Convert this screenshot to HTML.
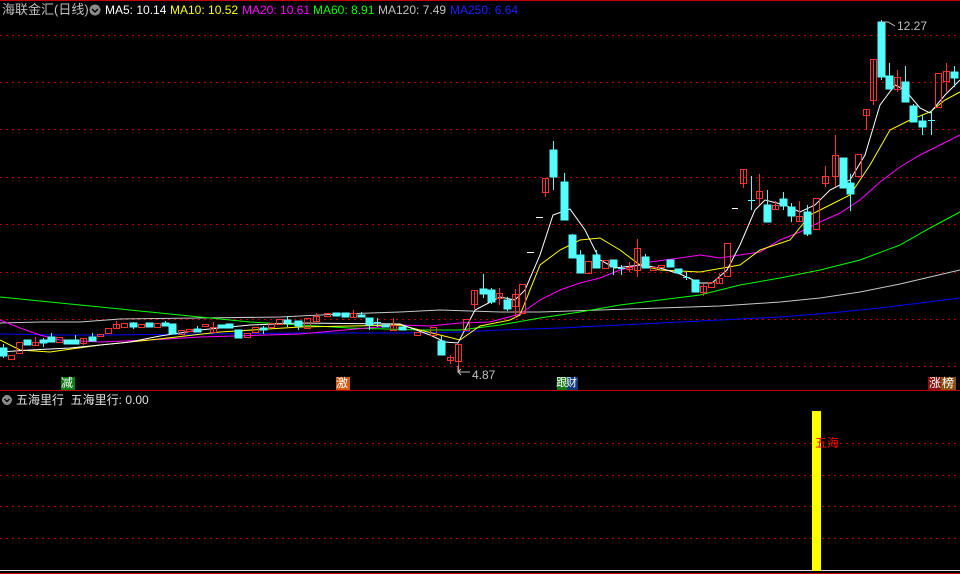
<!DOCTYPE html>
<html><head><meta charset="utf-8"><style>
html,body{margin:0;padding:0;background:#000;width:960px;height:574px;overflow:hidden}
.t{position:absolute;font-family:"Liberation Sans","Noto Sans CJK SC",sans-serif;font-size:12px;white-space:nowrap;line-height:14px}
</style></head><body>
<svg width="960" height="574" style="position:absolute;left:0;top:0" shape-rendering="crispEdges">
<line x1="0" y1="0.5" x2="960" y2="0.5" stroke="#c00000"/>
<g stroke="#c00000" stroke-dasharray="2,4">
<line x1="0" y1="35.5" x2="960" y2="35.5"/><line x1="0" y1="82.5" x2="960" y2="82.5"/>
<line x1="0" y1="129.5" x2="960" y2="129.5"/><line x1="0" y1="177.5" x2="960" y2="177.5"/>
<line x1="0" y1="224.5" x2="960" y2="224.5"/><line x1="0" y1="272.5" x2="960" y2="272.5"/>
<line x1="0" y1="319.5" x2="960" y2="319.5"/><line x1="0" y1="366.5" x2="960" y2="366.5"/>
<line x1="0" y1="443.5" x2="960" y2="443.5"/><line x1="0" y1="475.5" x2="960" y2="475.5"/>
<line x1="0" y1="506.5" x2="960" y2="506.5"/><line x1="0" y1="538.5" x2="960" y2="538.5"/>
</g>
<line x1="0" y1="390.5" x2="960" y2="390.5" stroke="#c00000"/>
<line x1="0" y1="570.5" x2="960" y2="570.5" stroke="#e0e0e0"/>
<line x1="0" y1="573.5" x2="960" y2="573.5" stroke="#c00000"/>
<rect x="812" y="411" width="9" height="160" fill="#ffff00"/>
<g fill="none" stroke-width="1" shape-rendering="auto">
<polyline stroke="#0000ff" points="0,334 60,335 100,335 200,334 300,333 400,333 460,332 500,330 560,328 600,326 660,323 720,320 780,317 830,313 880,308 920,303 960,298"/>
<polyline stroke="#c8c8c8" points="0,323 40,322 80,322 120,319 200,318 280,317 340,314 400,312 440,310 500,312 540,312 600,310 660,308 720,306 780,302 820,298 860,292 900,284 930,277 960,270"/>
<polyline stroke="#00ff00" points="0,297 50,302 100,307 150,312 200,317 250,322 300,325 350,328 420,330 460,330 500,325 540,318 580,312 620,305 660,300 700,295 740,285 780,278 820,270 860,260 900,245 930,228 960,212"/>
<polyline stroke="#ff00ff" points="0,320 20,328 40,335 60,340 100,342 150,340 200,337 300,334 400,325 430,326 460,323 490,322 520,314 540,300 560,290 580,283 600,278 620,270 650,262 680,258 700,255 720,258 740,255 760,252 780,240 800,232 820,222 840,213 860,200 880,182 900,167 920,155 940,145 960,135"/>
<polyline stroke="#ffff00" points="0,340 20,350 50,352 100,345 150,340 220,332 300,327 400,325 440,335 460,340 480,326 510,320 520,315 540,265 560,250 580,240 600,238 620,250 640,265 660,270 700,272 740,265 760,250 790,240 810,215 830,205 850,195 870,165 890,130 910,120 930,112 945,100 960,92"/>
<polyline stroke="#ffffff" points="0,352 30,350 70,348 130,342 160,336 200,330 250,325 300,323 400,324 430,335 445,342 458,343 475,310 500,297 515,300 525,290 540,255 553,215 570,209 585,230 600,260 615,268 640,265 660,268 680,274 700,283 712,283 727,270 740,245 755,210 765,200 785,205 800,212 815,205 830,190 850,180 865,155 880,105 895,85 905,90 920,108 930,113 945,95 960,80"/>
</g>
<g id="c">
<!-- cyan candles: wick line + filled rect -->
<g stroke="#54ffff" fill="#54ffff">
<line x1="3.5" y1="344" x2="3.5" y2="358"/><rect x="0" y="348" width="7" height="8"/>
<rect x="24" y="340" width="7" height="5"/>
<line x1="43.5" y1="338" x2="43.5" y2="347"/><rect x="40" y="340" width="7" height="3"/>
<line x1="51.5" y1="333" x2="51.5" y2="342"/><rect x="48" y="337" width="7" height="5"/>
<rect x="64" y="340" width="7" height="4"/>
<line x1="75.5" y1="335" x2="75.5" y2="344"/><rect x="72" y="340" width="7" height="4"/>
<line x1="92.5" y1="333" x2="92.5" y2="341"/><rect x="89" y="337" width="7" height="4"/>
<line x1="133.5" y1="322" x2="133.5" y2="329"/><rect x="130" y="323" width="7" height="4"/>
<rect x="146" y="323" width="7" height="4"/>
<line x1="165.5" y1="321" x2="165.5" y2="326"/><rect x="162" y="323" width="7" height="3"/>
<rect x="169" y="324" width="7" height="10"/>
<line x1="197.5" y1="326" x2="197.5" y2="332"/><rect x="194" y="329" width="7" height="3"/>
<rect x="218" y="325" width="7" height="3"/>
<rect x="226" y="324" width="7" height="4"/>
<rect x="235" y="330" width="7" height="8"/>
<line x1="263.5" y1="326" x2="263.5" y2="334"/><rect x="260" y="328" width="7" height="2"/>
<line x1="287.5" y1="316" x2="287.5" y2="327"/><rect x="284" y="320" width="7" height="3"/>
<line x1="298.5" y1="321" x2="298.5" y2="330"/><rect x="295" y="321" width="7" height="5"/>
<rect x="333" y="313" width="7" height="3"/>
<rect x="342" y="313" width="7" height="4"/>
<line x1="361.5" y1="312" x2="361.5" y2="317"/><rect x="358" y="315" width="7" height="2"/>
<line x1="369.5" y1="318" x2="369.5" y2="330"/><rect x="366" y="318" width="7" height="7"/>
<line x1="377.5" y1="318" x2="377.5" y2="327"/><line x1="374" y1="322.5" x2="381" y2="322.5"/>
<rect x="382" y="325" width="7" height="2"/>
<rect x="399" y="327" width="7" height="3"/>
<line x1="441.5" y1="336" x2="441.5" y2="355"/><rect x="438" y="341" width="7" height="14"/>
<line x1="483.5" y1="274" x2="483.5" y2="298"/><rect x="480" y="289" width="7" height="5"/>
<line x1="491.5" y1="288" x2="491.5" y2="304"/><rect x="488" y="290" width="7" height="12"/>
<line x1="507.5" y1="297" x2="507.5" y2="311"/><rect x="504" y="300" width="7" height="9"/>
<line x1="553.5" y1="141" x2="553.5" y2="190"/><rect x="550" y="150" width="7" height="27"/>
<line x1="564.5" y1="173" x2="564.5" y2="220"/><rect x="561" y="182" width="7" height="38"/>
<line x1="572.5" y1="234" x2="572.5" y2="258"/><rect x="569" y="235" width="7" height="23"/>
<line x1="580.5" y1="250" x2="580.5" y2="273"/><rect x="577" y="255" width="7" height="18"/>
<line x1="596.5" y1="250" x2="596.5" y2="268"/><rect x="593" y="255" width="7" height="13"/>
<line x1="613.5" y1="260" x2="613.5" y2="275"/><rect x="610" y="260" width="7" height="7"/>
<line x1="621.5" y1="265" x2="621.5" y2="275"/><line x1="618" y1="268.5" x2="625" y2="268.5"/>
<line x1="645.5" y1="254" x2="645.5" y2="268"/><rect x="642" y="257" width="7" height="11"/>
<rect x="667" y="260" width="7" height="7"/>
<rect x="675" y="269" width="7" height="4"/>
<line x1="686.5" y1="272" x2="686.5" y2="280"/><line x1="683" y1="277.5" x2="690" y2="277.5"/>
<rect x="692" y="280" width="7" height="12"/>
<line x1="751.5" y1="176" x2="751.5" y2="210"/><line x1="748" y1="200.5" x2="755" y2="200.5"/>
<line x1="767.5" y1="190" x2="767.5" y2="222"/><rect x="764" y="205" width="7" height="17"/>
<line x1="783.5" y1="192" x2="783.5" y2="210"/><rect x="780" y="199" width="7" height="7"/>
<line x1="791.5" y1="203" x2="791.5" y2="222"/><rect x="788" y="207" width="7" height="9"/>
<line x1="807.5" y1="205" x2="807.5" y2="236"/><rect x="804" y="212" width="7" height="22"/>
<rect x="840" y="158" width="7" height="30"/>
<line x1="850.5" y1="174" x2="850.5" y2="211"/><rect x="847" y="183" width="7" height="11"/>
<line x1="881.5" y1="20" x2="881.5" y2="80"/><rect x="878" y="22" width="7" height="55"/>
<line x1="889.5" y1="63" x2="889.5" y2="89"/><rect x="886" y="76" width="7" height="13"/>
<line x1="905.5" y1="66" x2="905.5" y2="102"/><rect x="902" y="82" width="7" height="20"/>
<line x1="913.5" y1="104" x2="913.5" y2="122"/><rect x="910" y="106" width="7" height="16"/>
<line x1="922.5" y1="115" x2="922.5" y2="135"/><rect x="919" y="121" width="7" height="6"/>
<line x1="931.5" y1="110" x2="931.5" y2="135"/><line x1="928" y1="120.5" x2="935" y2="120.5"/>
<line x1="954.5" y1="66" x2="954.5" y2="87"/><rect x="951" y="72" width="7" height="6"/>
</g>
<g stroke="#ff3232" fill="none">
<rect x="8.5" y="355.5" width="6" height="4"/>
<rect x="16.5" y="342.5" width="6" height="11"/>
<line x1="35.5" y1="337" x2="35.5" y2="346"/><rect x="32.5" y="342.5" width="6" height="3"/>
<rect x="56.5" y="337.5" width="6" height="5"/>
<line x1="83.5" y1="338" x2="83.5" y2="345"/><rect x="80.5" y="338.5" width="6" height="5"/>
<rect x="97.5" y="334.5" width="6" height="2"/>
<rect x="105.5" y="328.5" width="6" height="5"/>
<line x1="116.5" y1="321" x2="116.5" y2="328"/><rect x="113.5" y="324.5" width="6" height="4"/>
<rect x="121.5" y="323.5" width="6" height="4"/>
<rect x="138.5" y="324.5" width="6" height="3"/>
<rect x="154.5" y="323.5" width="6" height="4"/>
<rect x="178.5" y="330.5" width="6" height="4"/>
<rect x="186.5" y="329.5" width="6" height="2"/>
<rect x="202.5" y="324.5" width="6" height="2"/>
<line x1="213.5" y1="322" x2="213.5" y2="332"/><rect x="210.5" y="327.5" width="6" height="5"/>
<rect x="244.5" y="333.5" width="6" height="4"/>
<rect x="252.5" y="327.5" width="6" height="5"/>
<rect x="268.5" y="323.5" width="6" height="4"/>
<rect x="276.5" y="319.5" width="6" height="5"/>
<rect x="304.5" y="318.5" width="6" height="10"/>
<line x1="316.5" y1="313" x2="316.5" y2="321"/><rect x="313.5" y="316.5" width="6" height="5"/>
<rect x="324.5" y="313.5" width="6" height="3"/>
<line x1="353.5" y1="310" x2="353.5" y2="317"/><rect x="350.5" y="313.5" width="6" height="4"/>
<line x1="393.5" y1="318" x2="393.5" y2="330"/><rect x="390.5" y="325.5" width="6" height="5"/>
<rect x="414.5" y="332.5" width="6" height="3"/>
<rect x="430.5" y="327.5" width="6" height="8"/>
<line x1="450.5" y1="355" x2="450.5" y2="364"/><rect x="447.5" y="357.5" width="6" height="3"/>
<line x1="458.5" y1="344" x2="458.5" y2="372"/><rect x="455.5" y="344.5" width="6" height="17"/>
<rect x="463.5" y="319.5" width="6" height="11"/>
<line x1="474.5" y1="290" x2="474.5" y2="309"/><rect x="471.5" y="290.5" width="6" height="14"/>
<line x1="499.5" y1="288" x2="499.5" y2="305"/><rect x="496.5" y="293.5" width="6" height="5"/>
<line x1="515.5" y1="289" x2="515.5" y2="318"/><rect x="512.5" y="294.5" width="6" height="12"/>
<rect x="519.5" y="284.5" width="6" height="29"/>
<line x1="545.5" y1="178" x2="545.5" y2="197"/><rect x="542.5" y="178.5" width="6" height="14"/>
<rect x="585.5" y="261.5" width="6" height="12"/>
<rect x="602.5" y="260.5" width="6" height="8"/>
<line x1="629.5" y1="262" x2="629.5" y2="272"/><rect x="626.5" y="267.5" width="6" height="2"/>
<line x1="637.5" y1="239" x2="637.5" y2="277"/><rect x="634.5" y="248.5" width="6" height="22"/>
<rect x="650.5" y="267.5" width="6" height="3"/>
<rect x="658.5" y="265.5" width="6" height="2"/>
<line x1="703.5" y1="284" x2="703.5" y2="296"/><rect x="700.5" y="286.5" width="6" height="6"/>
<rect x="708.5" y="282.5" width="6" height="5"/>
<line x1="719.5" y1="273" x2="719.5" y2="283"/><rect x="716.5" y="278.5" width="6" height="5"/>
<rect x="724.5" y="243.5" width="6" height="33"/>
<line x1="743.5" y1="169" x2="743.5" y2="188"/><rect x="740.5" y="169.5" width="6" height="14"/>
<line x1="759.5" y1="174" x2="759.5" y2="205"/><rect x="756.5" y="191.5" width="6" height="7"/>
<line x1="775.5" y1="201" x2="775.5" y2="209"/><rect x="772.5" y="205.5" width="6" height="4"/>
<line x1="799.5" y1="201" x2="799.5" y2="222"/><rect x="796.5" y="216.5" width="6" height="5"/>
<rect x="813.5" y="198.5" width="6" height="31"/>
<line x1="825.5" y1="166" x2="825.5" y2="187"/><rect x="822.5" y="176.5" width="6" height="7"/>
<line x1="835.5" y1="135" x2="835.5" y2="187"/><rect x="832.5" y="155.5" width="6" height="21"/>
<rect x="855.5" y="154.5" width="6" height="22"/>
<line x1="866.5" y1="109" x2="866.5" y2="130"/><rect x="863.5" y="109.5" width="6" height="6"/>
<line x1="873.5" y1="59" x2="873.5" y2="105"/><rect x="870.5" y="59.5" width="6" height="41"/>
<line x1="897.5" y1="70" x2="897.5" y2="92"/><rect x="894.5" y="77.5" width="6" height="12"/>
<rect x="935.5" y="73.5" width="6" height="34"/>
<line x1="946.5" y1="63" x2="946.5" y2="92"/><rect x="943.5" y="71.5" width="6" height="10"/>
</g>
<g stroke="#ffffff">
<line x1="527" y1="252.5" x2="534" y2="252.5"/><line x1="536" y1="217.5" x2="543" y2="217.5"/><line x1="732" y1="208.5" x2="738" y2="208.5"/>
</g>
<g stroke="#c0c0c0" fill="none" shape-rendering="auto">
<polyline points="458,366 458,372 470,372"/><polyline points="461,369 458,372 461,375"/>
<polyline points="881,22 888,22 895,26"/>
</g>
</g>
<circle cx="95" cy="10" r="5.5" fill="#8a8a8a"/>
<polyline points="92,9 95,12 98,9" stroke="#000" stroke-width="1.5" fill="none" shape-rendering="auto"/>
<circle cx="7" cy="400" r="5" fill="#8a8a8a"/>
<polyline points="4.5,399 7,401.5 9.5,399" stroke="#000" stroke-width="1.3" fill="none" shape-rendering="auto"/>
<rect x="61" y="377" width="14" height="13" fill="#0a7a14"/>
<rect x="336" y="377" width="14" height="13" fill="#d05a10"/>
<rect x="557" y="377" width="10" height="13" fill="#107a10"/>
<rect x="567" y="377" width="11" height="13" fill="#103a7a"/>
<rect x="928" y="377" width="13" height="13" fill="#8a1010"/>
<rect x="941" y="377" width="15" height="13" fill="#8a5010"/>
</svg>
<div class="t" style="left:2px;top:3px;color:#c0c0c0;font-size:13px">海联金汇(日线)</div>
<div class="t" style="left:105px;top:3px;color:#fff">MA5: 10.14</div>
<div class="t" style="left:170px;top:3px;color:#ffff00">MA10: 10.52</div>
<div class="t" style="left:242px;top:3px;color:#ff00ff">MA20: 10.61</div>
<div class="t" style="left:313px;top:3px;color:#00ff00">MA60: 8.91</div>
<div class="t" style="left:378px;top:3px;color:#c0c0c0">MA120: 7.49</div>
<div class="t" style="left:450px;top:3px;color:#2020ff">MA250: 6.64</div>
<div class="t" style="left:472px;top:368px;color:#c0c0c0">4.87</div>
<div class="t" style="left:897px;top:19px;color:#c0c0c0">12.27</div>
<div class="t" style="left:61px;top:377px;color:#fff;font-size:12px;line-height:13px">减</div>
<div class="t" style="left:336px;top:377px;color:#fff;font-size:12px;line-height:13px">激</div>
<div class="t" style="left:556px;top:377px;color:#fff;font-size:11px;line-height:13px;letter-spacing:-1px">跟财</div>
<div class="t" style="left:929px;top:377px;color:#fff;font-size:12px;line-height:13px;letter-spacing:1px">涨榜</div>
<div class="t" style="left:16px;top:393px;color:#e0e0e0">五海里行&nbsp;&nbsp;五海里行: 0.00</div>
<div class="t" style="left:815px;top:436px;color:#ff0000">五海</div>
</body></html>
